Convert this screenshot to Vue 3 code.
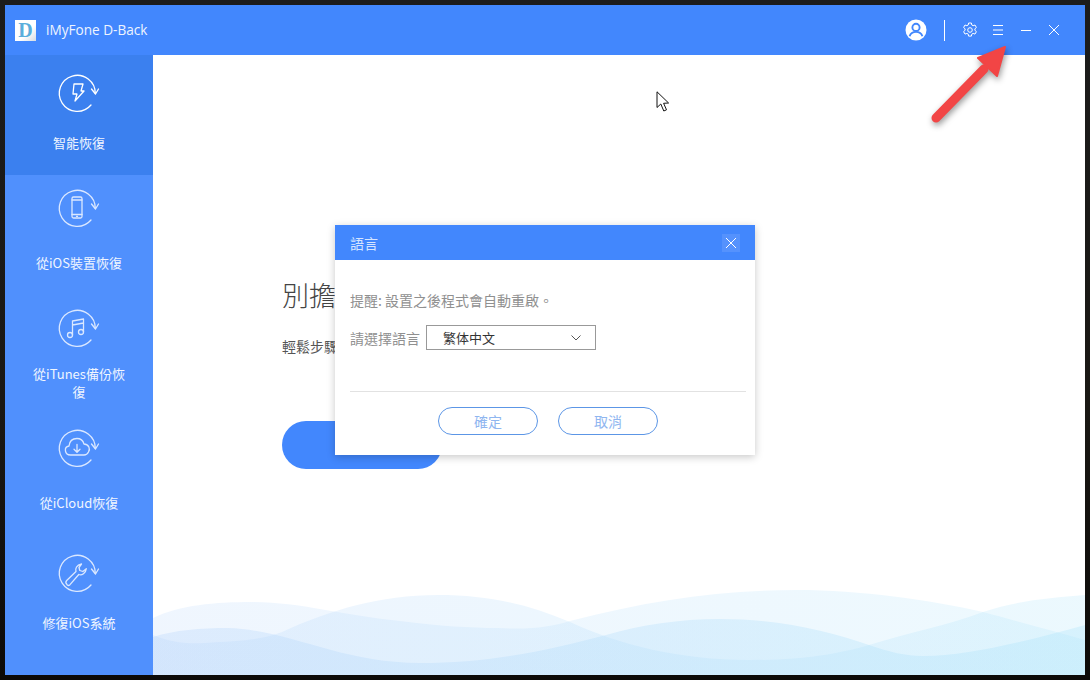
<script setup>
const items = [
  { label: '智能恢復', icon: 'bolt', active: true, low: true },
  { label: '從iOS裝置恢復', icon: 'phone' },
  { label: '從iTunes備份恢復', icon: 'music' },
  { label: '從iCloud恢復', icon: 'cloud' },
  { label: '修復iOS系統', icon: 'wrench', low: true },
]
</script>

<template>
  <div class="desktop">
    <div class="window">
      <header class="titlebar">
        <div class="brand">
          <span class="logo">D</span>
          <span class="app-name">iMyFone D-Back</span>
        </div>
        <div class="controls">
          <svg class="user" viewBox="0 0 22 22" width="22" height="22">
            <circle cx="11" cy="11" r="10.5" fill="#fff" />
            <circle cx="11" cy="8.4" r="3.6" fill="none" stroke="#4287fd" stroke-width="1.9" />
            <path d="M4.6 17.2c1-3 3.6-4.3 6.4-4.3s5.4 1.3 6.4 4.3" fill="none" stroke="#4287fd" stroke-width="1.9" />
          </svg>
          <span class="divider"></span>
          <svg class="gear" viewBox="0 0 16 16" width="16" height="16" fill="none" stroke="#fff" stroke-width="1">
            <path d="M6.6 1h2.8l.4 2 1.3.7 1.9-.7 1.4 2.5-1.5 1.3v1.5l1.5 1.3-1.4 2.5-1.9-.7-1.3.7-.4 2H6.6l-.4-2-1.3-.7-1.9.7-1.4-2.5 1.5-1.3V6.800L1.600 5.500 3 3l1.900.7 1.300-.7z" stroke-linejoin="round" />
            <circle cx="8" cy="8" r="2.300" />
          </svg>
          <svg class="menu" viewBox="0 0 10 10" width="10" height="10" stroke="#fff" stroke-width="1">
            <path d="M0 .5h10M0 5h10M0 9.500h10" />
          </svg>
          <svg class="minimize" viewBox="0 0 10 10" width="10" height="10" stroke="#fff" stroke-width="1">
            <path d="M0 5.500h10" />
          </svg>
          <svg class="close" viewBox="0 0 10 10" width="10" height="10" stroke="#fff" stroke-width="1">
            <path d="M0 0l10 10M10 0L0 10" />
          </svg>
        </div>
      </header>

      <div class="body">
        <nav class="sidebar">
          <div
            v-for="item in items"
            :key="item.label"
            class="nav-item"
            :class="{ active: item.active, low: item.low }"
          >
            <svg class="nav-icon" viewBox="0 0 48 44" width="48" height="44" fill="none" stroke="currentColor" stroke-width="1.300" stroke-linecap="round" stroke-linejoin="round">
              <path d="M36 34A18 18 0 1 1 40.300 22.500" />
              <path d="M36.500 18L40.500 23l3-5" />
              <path v-if="item.icon === 'bolt'" d="M19 13H28L26 20H29L20 30L22 23H18Z" />
              <g v-if="item.icon === 'phone'">
                <rect x="17" y="11" width="10" height="21" rx="1.500" />
                <path d="M17 14h10M17 28.500h10M21.500 30.300h1" />
              </g>
              <g v-if="item.icon === 'music'">
                <circle cx="15" cy="29" r="2.500" />
                <circle cx="26" cy="26" r="2.500" />
                <path d="M17.500 29V15l11-2V26M17.500 19l11-2" />
              </g>
              <g v-if="item.icon === 'cloud'">
                <path d="M15.500 29c-6 0-7-8-1.500-9c.5-5 4-7.500 8-7.500c3.500 0 6 2 7 5.500c5 .5 6.500 5 4.500 8c-1 2-2.500 3-4.500 3z" />
                <path d="M22 18.500v7.500M19 23.300l3 3 3-3" />
              </g>
              <g v-if="item.icon === 'wrench'">
                <path d="M12 33.500c-1.500-1.500-1.500-2.800-.3-4l9.300-9c-1-3 .5-6.500 5.500-7.500l-2.500 3.500 .8 3 3 1 3.500-2.800c-.5 4.500-4.500 7-7.500 5.800l-8.800 10.200c-1.200 1-2.200 1-3 .2z" />
              </g>
            </svg>
            <span class="nav-label">{{ item.label }}</span>
          </div>
        </nav>

        <main class="main">
          <svg class="waves" viewBox="153 570 932 105" preserveAspectRatio="none">
            <defs>
              <linearGradient id="waveFill" gradientUnits="userSpaceOnUse" x1="153" y1="0" x2="1085" y2="0">
                <stop offset="0" stop-color="#b2d2fb" />
                <stop offset="1" stop-color="#a6e2fa" />
              </linearGradient>
            </defs>
            <path fill="url(#waveFill)" fill-opacity=".2" d="M153 618C180 605 215 602 252 602C300 602 340 615 400 621C440 626 470 628 498 628C530 630 550 627 570 621C650 600 720 590 797 590C860 590 930 600 983 612C1020 622 1050 630 1085 640V675H153Z" />
            <path fill="url(#waveFill)" fill-opacity=".22" d="M153 635C170 642 185 644 204 643C240 641 262 640 282 632C330 610 380 595 438 595C490 595 530 605 570 622C620 645 680 660 750 660C800 660 835 655 869 645C910 632 950 625 983 612C1020 600 1050 598 1085 595V675H153Z" />
            <path fill="url(#waveFill)" fill-opacity=".3" d="M153 637C175 630 200 628 228 628C290 630 340 663 420 663C490 663 550 650 606 635C640 625 680 619 720 619C780 619 830 632 869 645C890 652 905 656 923 656C970 656 1030 640 1085 625V675H153Z" />
          </svg>
          <h1 class="headline">別擔</h1>
          <p class="lead">輕鬆步驟</p>
          <button class="start" type="button"></button>
        </main>
      </div>

      <section class="dialog">
        <header class="dialog-head">
          <span>語言</span>
          <span class="dialog-close">
            <svg viewBox="0 0 10 10" width="10" height="10" stroke="#fff" stroke-width="1">
              <path d="M0 0l10 10M10 0L0 10" />
            </svg>
          </span>
        </header>
        <div class="dialog-body">
          <p class="hint">提醒: 設置之後程式會自動重啟。</p>
          <div class="field">
            <span class="field-label">請選擇語言</span>
            <div class="select">
              <span>繁体中文</span>
              <svg viewBox="0 0 10 6" width="10" height="6" fill="none" stroke="#555" stroke-width="1">
                <path d="M.5 .5L5 5l4.500-4.500" />
              </svg>
            </div>
          </div>
        </div>
        <footer class="dialog-foot">
          <button class="ghost" type="button">確定</button>
          <button class="ghost" type="button">取消</button>
        </footer>
      </section>

      <svg class="cursor" viewBox="0 0 14 21" width="14" height="21">
        <path d="M1 .800V16.500l3.800-3.500 3 7 2.700-1.200-2.900-6.500 5-.3z" fill="#fff" stroke="#111" stroke-width="1" stroke-linejoin="miter" />
      </svg>

      <svg class="pointer-arrow" viewBox="0 0 90 95" width="90" height="95">
        <path d="M8 80L56 31" stroke="#f24545" stroke-width="9" stroke-linecap="round" />
        <path d="M77 9L50 20L69 38Z" fill="#f24545" stroke="#f24545" stroke-width="2" stroke-linejoin="round" />
      </svg>
    </div>
  </div>
</template>

<style>
html,
body {
  margin: 0;
  background: #151515;
}
</style>

<style scoped>
.desktop {
  width: 1090px;
  height: 680px;
  padding: 5px;
  box-sizing: border-box;
  overflow: hidden;
  background: linear-gradient(180deg, #1c1c1c 0%, #1a1814 60%, #0c0a08 100%);
  font-family: "Noto Sans CJK TC", "Noto Sans", sans-serif;
}

.window {
  position: relative;
  width: 1080px;
  height: 670px;
  display: flex;
  flex-direction: column;
  background: #fff;
}

.titlebar {
  flex: 0 0 50px;
  display: flex;
  align-items: center;
  justify-content: space-between;
  background: #4287fd;
  color: #fff;
}

.brand {
  display: flex;
  align-items: center;
  gap: 10px;
  padding-left: 10px;
}

.logo {
  width: 21px;
  height: 21px;
  display: flex;
  align-items: center;
  justify-content: center;
  background: linear-gradient(135deg, #fff 60%, #d5dbe2);
  color: #5aaedc;
  font: 700 20px/21px "Liberation Serif", serif;
}

.app-name {
  font: 400 13.600px/20px "Open Sans", "Noto Sans", sans-serif;
  color: #eef4ff;
}

.controls {
  display: flex;
  align-items: center;
}

.user {
  margin-right: 17px;
}

.divider {
  width: 1px;
  height: 21px;
  background: #fff;
  margin-right: 17px;
}

.gear {
  margin-right: 15px;
}

.menu {
  margin-right: 18px;
}

.minimize {
  margin-right: 18px;
}

.close {
  margin-right: 26px;
}

.body {
  flex: 1;
  min-height: 0;
  display: flex;
}

.sidebar {
  flex: 0 0 148px;
  display: flex;
  flex-direction: column;
  background: #5090fd;
}

.nav-item {
  height: 120px;
  box-sizing: border-box;
  display: grid;
  grid-template-rows: 70px 36px;
  justify-items: center;
  color: #dbe8ff;
}

.nav-item.active {
  background: #3b80ef;
  color: #fff;
}

.nav-icon {
  margin-top: 11px;
}

.nav-item.low .nav-icon {
  margin-top: 16px;
}

.nav-label {
  align-self: center;
  width: 104px;
  text-align: center;
  font-size: 13px;
  line-height: 18px;
  color: #f1f6ff;
}

.main {
  position: relative;
  flex: 1;
  min-width: 0;
  box-sizing: border-box;
  padding: 220px 0 0 129px;
  overflow: hidden;
}

.waves {
  position: absolute;
  left: 0;
  bottom: 0;
  width: 932px;
  height: 105px;
}

.headline {
  margin: 0;
  font-size: 27px;
  font-weight: 300;
  line-height: 40px;
  color: #444;
}

.lead {
  margin: 21px 0 0;
  font-size: 14px;
  line-height: 20px;
  color: #555;
}

.start {
  display: block;
  width: 160px;
  height: 48px;
  margin-top: 65px;
  border: 0;
  border-radius: 24px;
  background: #4287fd;
}

.dialog {
  position: absolute;
  left: 330px;
  top: 220px;
  width: 420px;
  height: 230px;
  display: flex;
  flex-direction: column;
  background: #fff;
  box-shadow: 0 2px 8px rgba(0, 0, 0, 0.22);
}

.dialog-head {
  flex: 0 0 35px;
  display: flex;
  align-items: center;
  justify-content: space-between;
  padding: 0 15px 0 15px;
  background: #4287fd;
  color: #d6e5ff;
  font-size: 14px;
}

.dialog-close {
  width: 18px;
  height: 18px;
  display: flex;
  align-items: center;
  justify-content: center;
  background: #5592fd;
}

.dialog-body {
  flex: 1;
  padding: 30px 8px 0 15px;
  font-size: 14px;
  color: #909090;
}

.hint {
  margin: 0;
  line-height: 20px;
}

.field {
  display: flex;
  align-items: center;
  gap: 6px;
  margin-top: 15px;
}

.field-label {
  line-height: 20px;
}

.select {
  width: 170px;
  height: 25px;
  box-sizing: border-box;
  display: flex;
  align-items: center;
  justify-content: space-between;
  padding: 0 14px 0 16px;
  border: 1px solid #999;
  font-size: 13px;
  color: #333;
}

.dialog-foot {
  flex: 0 0 64px;
  display: flex;
  justify-content: center;
  gap: 20px;
  margin: 0 9px 0 15px;
  padding: 15px 0 0;
  box-sizing: border-box;
  border-top: 1px solid #e2e2e2;
}

.ghost {
  width: 100px;
  height: 28px;
  padding: 0;
  border: 1px solid #5c96e6;
  border-radius: 14px;
  background: #fff;
  color: #8fb6f0;
  font: inherit;
  font-size: 14px;
}

.cursor {
  position: absolute;
  left: 651px;
  top: 86px;
}

.pointer-arrow {
  position: absolute;
  left: 923px;
  top: 33px;
  filter: drop-shadow(1px 3px 3px rgba(0, 0, 0, 0.4));
}
</style>
